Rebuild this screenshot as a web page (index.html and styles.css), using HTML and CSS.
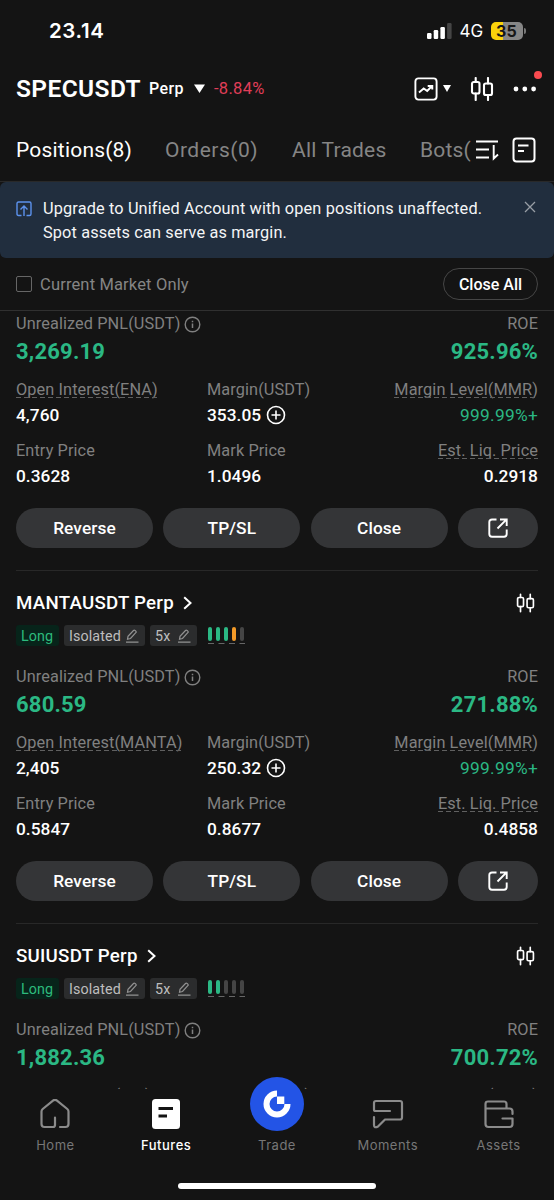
FILE: index.html
```html
<!DOCTYPE html>
<html lang="en">
<head>
<meta charset="utf-8">
<title>Futures positions</title>
<link rel="stylesheet" href="styles.css">
</head>
<body>
<svg class="defs" width="0" height="0">
  <symbol id="candles" viewBox="0 0 24 24"><g fill="none" stroke="currentColor" stroke-width="2.100" stroke-linecap="round"><rect x="2" y="5" width="7.500" height="11.500" rx="1.800"/><path d="M5.700 1v4M5.700 16.500V23"/><rect x="14" y="6.500" width="8" height="11.500" rx="1.800"/><path d="M18 1v5.500M18 18v5"/></g></symbol>
  <symbol id="info" viewBox="0 0 17 17"><circle cx="8.500" cy="8.500" r="7.300" fill="none" stroke="currentColor" stroke-width="1.400"/><path d="M8.500 7.500v4.500M8.500 4.700v1.500" stroke="currentColor" stroke-width="1.500"/></symbol>
  <symbol id="plus" viewBox="0 0 20 20"><circle cx="10" cy="10" r="8.500" fill="none" stroke="currentColor" stroke-width="1.600"/><path d="M10 5.500v9M5.500 10h9" stroke="currentColor" stroke-width="1.600"/></symbol>
  <symbol id="pen" viewBox="0 0 14 14"><path d="M2.500 10.300l.5-3L8.500 1.500q.7-.7 1.600 0l.7.600q.8.800 0 1.600L5.500 9.500zM1 13.200h12.500" fill="none" stroke="currentColor" stroke-width="1.200"/></symbol>
  <symbol id="share" viewBox="0 0 20 20"><path d="M8.500 1.500H4Q1.300 1.500 1.300 4v12q0 2.700 2.700 2.700h12q2.700 0 2.700-2.700V11.500M12 1.500h6.700V8M18.300 1.700L9.500 10.500" fill="none" stroke="currentColor" stroke-width="1.900"/></symbol>
  <symbol id="chevron" viewBox="0 0 9 14"><path d="M1.200 1.200L7.500 7l-6.300 5.800" fill="none" stroke="currentColor" stroke-width="2"/></symbol>
</svg>
<div class="app">
  <header class="status">
    <span class="clock">23.14</span>
    <span class="status-right">
      <svg width="25" height="16" viewBox="0 0 25 16"><g fill="#fff"><rect y="10" width="4.500" height="6" rx="1.200"/><rect x="6.700" y="7" width="4.500" height="9" rx="1.200"/><rect x="13.400" y="4" width="4.500" height="12" rx="1.200"/><rect x="20.100" width="4.500" height="16" rx="1.200" fill="#454545"/></g></svg>
      <span class="network">4G</span>
      <span class="battery">35</span><span class="battery-cap"></span>
    </span>
  </header>
  <div class="pair">
    <span class="symbol">SPECUSDT</span><span class="perp">Perp</span>
    <svg class="caret" width="11" height="9" viewBox="0 0 11 9"><path d="M0 .5h11L5.500 9z" fill="#fff"/></svg>
    <span class="change">-8.84%</span>
    <span class="pair-icons">
      <svg width="24" height="24" viewBox="0 0 24 24" fill="none" stroke="#fff" stroke-width="1.900"><rect x="1.400" y="1.400" width="21.200" height="21.200" rx="3"/><path d="M5 15.500l4.700-4 3.500 2.500L18 9M13.700 9h4.600v3.500"/></svg>
      <svg class="mini-caret" width="8" height="7" viewBox="0 0 8 7"><path d="M0 0h8L4 7z" fill="#fff"/></svg>
      <svg class="pair-candles" width="24" height="24"><use href="#candles"/></svg>
      <span class="more"><svg width="24" height="24" viewBox="0 0 24 24" fill="#fff"><circle cx="3" cy="12" r="2.400"/><circle cx="11.800" cy="12" r="2.400"/><circle cx="20.600" cy="12" r="2.400"/></svg><i class="dot"></i></span>
    </span>
  </div>
  <nav class="tabs">
    <span class="tab active">Positions(8)</span><span class="tab orders">Orders(0)</span><span class="tab trades">All Trades</span><span class="tab bots">Bots(</span>
    <svg class="sort" width="24" height="22" viewBox="0 0 24 22" fill="none" stroke="#fff" stroke-width="1.900"><path d="M1 2.500h22M1 10.500h13M1 18.500h13M18.700 6v13.500L23 15.500"/></svg>
    <svg class="orders-icon" width="24" height="26" viewBox="0 0 24 26" fill="none" stroke="#fff" stroke-width="2"><rect x="1.500" y="1.500" width="21" height="23" rx="3"/><path d="M6 8.500h10.500M6 14h6"/></svg>
  </nav>
  <div class="banner">
    <svg width="16" height="16" viewBox="0 0 16 16" fill="none" stroke="#5c92ed" stroke-width="1.400"><path d="M5.500 14.500h-3q-1.500 0-1.500-1.500V2.500Q1 1 2.500 1h11Q15 1 15 2.500V13q0 1.500-1.500 1.500h-3M8 15V5.500M4.500 8.500L8 5l3.500 3.500"/></svg>
    <p>Upgrade to Unified Account with open positions unaffected.<br>Spot assets can serve as margin.</p>
    <svg class="dismiss" width="12" height="12" viewBox="0 0 12 12"><path d="M1 1l10 10M11 1L1 11" stroke="#989ea5" stroke-width="1.300"/></svg>
  </div>
  <div class="filter"><i class="check"></i><span class="filter-label">Current Market Only</span><span class="close-all">Close All</span></div>
  <main class="list" id="list"></main>
  <footer class="nav">
    <div class="nav-item"><svg width="30" height="30" viewBox="0 0 30 30"><path d="M15 18.500V26q0 2-2 2H4.500q-3 0-3-3V12.500q0-1.500 1.200-2.500L13 1.600q2-1.500 4 0L27.300 10q1.200 1 1.200 2.500V25q0 3-3 3H20"/></svg><span>Home</span></div>
    <div class="nav-item on"><svg width="30" height="30" viewBox="0 0 30 30"><rect class="solid" x="1" width="28" height="30" rx="3.500"/><path class="ink" d="M7.500 9.500H22M7.500 17H16"/></svg><span>Futures</span></div>
    <div class="nav-item"><div class="trade"><svg width="54" height="54" viewBox="0 0 54 54"><path d="M27 16.500A10.500 10.500 0 1 0 37.500 27" fill="none" stroke="#fff" stroke-width="6"/><path d="M27 19.500h7.300V27H27z" fill="#fff"/></svg></div><span>Trade</span></div>
    <div class="nav-item"><svg width="32" height="30" viewBox="0 0 32 30"><path d="M18 12H3.500Q2 12 2 10.500V4q0-2 2-2h24q2 0 2 2v14.500q0 2-2 2H13L6 27.500q-4 2-4-1.500v-8"/></svg><span>Moments</span></div>
    <div class="nav-item"><svg width="30" height="30" viewBox="0 0 30 30"><path d="M1.500 10V5q0-2.500 2.500-2.500h16Q22.500 2.500 22.500 5v4.500M1.500 9.500h24q3 0 3 3v2.500M1.500 9V25q0 3 3 3h21q3 0 3-3v-5.500H18.500"/></svg><span>Assets</span></div>
    <i class="home-bar"></i>
  </footer>
</div>
<script src="app.js"></script>
</body>
</html>
```
FILE: styles.css
```css
* { box-sizing: border-box; }
body { margin: 0; background: #141414; color: #fff; font-family: Roboto, "Noto Sans", sans-serif; }
svg { display: block; flex: none; }
.defs { position: absolute; }
.app { width: 554px; height: 1200px; display: flex; flex-direction: column; overflow: hidden; }
.status { height: 60px; display: flex; justify-content: space-between; align-items: center; padding: 1px 28.500px 0 49px; }
.clock { font: 600 20.500px Inter, sans-serif; letter-spacing: .6px; }
.status-right { display: flex; align-items: center; }
.network { font: 400 17px Inter, sans-serif; margin-left: 8px; width: 31px; }
.battery { width: 32px; height: 18px; border-radius: 5px; background: linear-gradient(90deg, #fbd20b 36%, #868686 36%); color: #171717; font: 700 16px/18px Inter, sans-serif; text-align: center; letter-spacing: .3px; }
.battery-cap { width: 2px; height: 6px; margin-left: 1px; border-radius: 0 2px 2px 0; background: #777; }
.pair { height: 57px; display: flex; align-items: center; padding: 0 17.500px 0 16px; }
.symbol { font-weight: 600; font-size: 24.500px; letter-spacing: .4px; width: 133px; }
.perp { font-weight: 500; font-size: 16px; letter-spacing: .4px; width: 45px; }
.change { color: #e03e58; font-size: 16.500px; letter-spacing: .3px; margin-left: 9px; }
.pair-icons { margin-left: auto; display: flex; align-items: center; }
.mini-caret { margin-left: 5px; }
.pair-candles { margin-left: 19px; }
.more { position: relative; margin-left: 19px; }
.dot { position: absolute; width: 8px; height: 8px; border-radius: 50%; background: #fa4b50; top: -6px; right: -5px; }
.tabs { height: 65px; display: flex; align-items: center; padding: 1px 0 0 16px; border-bottom: 1px solid #292929; color: #858585; font-size: 21px; letter-spacing: .2px; white-space: nowrap; }
.tab { width: 149px; }
.tab.active { color: #fff; }
.tab.orders { width: 127px; letter-spacing: .5px; }
.tab.trades { width: 128px; }
.tab.bots { width: 55px; overflow: hidden; }
.orders-icon { margin-left: 13px; }
.banner { height: 76px; display: flex; background: #212e3e; border-radius: 6px; padding: 19px 18px 0 16px; }
.banner p { margin: -4px 0 0 11px; font-size: 16.300px; line-height: 24px; letter-spacing: .15px; flex: 1; white-space: nowrap; color: #f4f5f6; }
.filter { height: 53px; display: flex; align-items: center; padding: 0 16px; border-bottom: 1px solid #303030; }
.check { width: 16px; height: 16px; border: 1.500px solid #666; border-radius: 2px; }
.filter-label { color: #858585; font-size: 16.500px; letter-spacing: .15px; margin-left: 8px; }
.close-all { margin-left: auto; width: 95px; height: 32px; border: 1px solid #464646; border-radius: 16px; font-weight: 500; font-size: 16px; line-height: 31px; text-align: center; }
.list { height: 778px; overflow: hidden; padding: 0 16px; }
.card { border-bottom: 1px solid #282828; padding-bottom: 22px; }
.head { padding-top: 20px; height: 93px; }
.title { display: flex; align-items: center; height: 24px; font-size: 18.700px; font-weight: 500; letter-spacing: .25px; }
.title .chev { margin-left: 9px; }
.title .mini { margin-left: auto; margin-right: 3px; }
.tags { display: flex; align-items: center; margin-top: 10px; height: 21px; font-size: 14.300px; letter-spacing: .1px; gap: 5px; }
.tag { height: 21px; border-radius: 3px; background: #2b2c2d; color: #bebebe; display: flex; align-items: center; padding-left: 5px; }
.tag svg { margin-left: auto; margin-right: 6px; color: #929292; }
.tag.long { width: 43px; background: #07241a; color: #2dbb7d; }
.tag.mode { width: 81px; }
.tag.lev { width: 47px; }
.risk { margin-left: 6px; width: 37px; height: 17px; display: flex; gap: 4px; position: relative; }
.risk i { width: 4px; height: 14px; border-radius: 2px; background: #454545; }
.risk .g { background: #2bb884; }
.risk .o { background: #f39a28; }
.risk svg { position: absolute; left: 0; bottom: 0; }
.row { display: flex; justify-content: space-between; }
.label { color: #808080; font-size: 16.300px; line-height: 20px; height: 20px; letter-spacing: .1px; display: flex; align-items: center; white-space: nowrap; }
.label svg { margin-left: 4px; }
.pnl { padding-top: 3px; height: 69px; }
.big { color: #2bb884; font-weight: 700; font-size: 22px; line-height: 24px; letter-spacing: .2px; margin-top: 6px; }
.pnl .row:first-child { height: 20px; }
.stats { display: grid; grid-template-columns: 191px 140px 191px; row-gap: 16px; height: 106px; }
.value { font-size: 17.300px; font-weight: 500; line-height: 20px; margin-top: 5px; letter-spacing: .05px; display: flex; align-items: center; height: 20px; }
.value svg { margin-left: 5px; }
.stat { display: flex; flex-direction: column; align-items: flex-start; }
.stat:nth-child(3n) { align-items: flex-end; }
.dash { position: relative; }
.dash::after { content: ""; position: absolute; left: 0; right: 0; bottom: 2px; height: 1px; background: repeating-linear-gradient(90deg, #606060 0 5px, transparent 5px 8px); }
.value.green { color: #2bb884; font-weight: 400; letter-spacing: .3px; }
.actions { display: grid; grid-template-columns: 137px 137px 137px 80px; justify-content: space-between; margin-top: 22px; }
.btn { height: 40px; border-radius: 20px; background: #343537; display: flex; align-items: center; justify-content: center; font-size: 17.300px; font-weight: 500; letter-spacing: .1px; }
.nav { height: 111px; background: #141414; display: grid; grid-template-columns: repeat(5, 1fr); position: relative; }
.nav-item { display: flex; flex-direction: column; align-items: center; padding-top: 10px; color: #777; font: 400 13px/16px Inter, sans-serif; letter-spacing: .5px; }
.nav-item > svg { fill: none; stroke: #8b8b8b; stroke-width: 2.200; stroke-linecap: round; stroke-linejoin: round; }
.nav-item span { margin-top: 8px; }
.nav-item.on { color: #fff; font-weight: 500; }
.nav .solid { fill: #fff; stroke: none; }
.nav .ink { stroke: #141414; stroke-width: 3; stroke-linecap: butt; }
.trade { width: 54px; height: 54px; margin-top: -22px; margin-bottom: -2px; border-radius: 50%; background: #2354e6; }
.home-bar { position: absolute; left: 178px; top: 94px; width: 198px; height: 6px; border-radius: 3px; background: #fff; }
```
FILE: app.js
```js
const positions = [
  { coin: 'ENA', pnl: '3,269.19', roe: '925.96%', size: '4,760', margin: '353.05', entry: '0.3628', mark: '1.0496', liq: '0.2918' },
  { coin: 'MANTA', head: true, risk: ['g', 'g', 'g', 'o', ''], pnl: '680.59', roe: '271.88%', size: '2,405', margin: '250.32', entry: '0.5847', mark: '0.8677', liq: '0.4858' },
  { coin: 'SUI', head: true, risk: ['g', 'g', '', '', ''], pnl: '1,882.36', roe: '700.72%' }
];
const icon = (id, w, h, cls = '') => `<svg class="${cls}" width="${w}" height="${h}"><use href="#${id}"/></svg>`;
const stat = (label, value, dash, cls = '') =>
  `<div class="stat"><span class="label ${dash ? 'dash' : ''}">${label}</span>${value ? `<span class="value ${cls}">${value}</span>` : ''}</div>`;
const head = p => `<div class="head">
  <div class="title">${p.coin}USDT Perp${icon('chevron', 9, 14, 'chev')}${icon('candles', 19, 20, 'mini')}</div>
  <div class="tags"><span class="tag long">Long</span><span class="tag mode">Isolated${icon('pen', 14, 14)}</span><span class="tag lev">5x${icon('pen', 14, 14)}</span>
  <span class="risk">${p.risk.map(c => `<i class="${c}"></i>`).join('')}<svg width="37" height="1"><path d="M0 .5h37" stroke="#666" stroke-dasharray="6 4.500"/></svg></span></div></div>`;
const card = p => `<section class="card">${p.head ? head(p) : ''}
  <div class="pnl"><div class="row"><span class="label">Unrealized PNL(USDT)${icon('info', 17, 17)}</span><span class="label">ROE</span></div>
  <div class="row big"><span>${p.pnl}</span><span>${p.roe}</span></div></div>
  <div class="stats">${stat(`Open Interest(${p.coin})`, p.size, true)}${stat('Margin(USDT)', p.margin && p.margin + icon('plus', 20, 20))}${stat('Margin Level(MMR)', p.size && '999.99%+', true, 'green')}
  ${p.entry ? stat('Entry Price', p.entry) + stat('Mark Price', p.mark) + stat('Est. Liq. Price', p.liq, true) : ''}</div>
  ${p.entry ? `<div class="actions"><span class="btn">Reverse</span><span class="btn">TP/SL</span><span class="btn">Close</span><span class="btn">${icon('share', 20, 20)}</span></div>` : ''}</section>`;
document.getElementById('list').innerHTML = positions.map(card).join('');
```
